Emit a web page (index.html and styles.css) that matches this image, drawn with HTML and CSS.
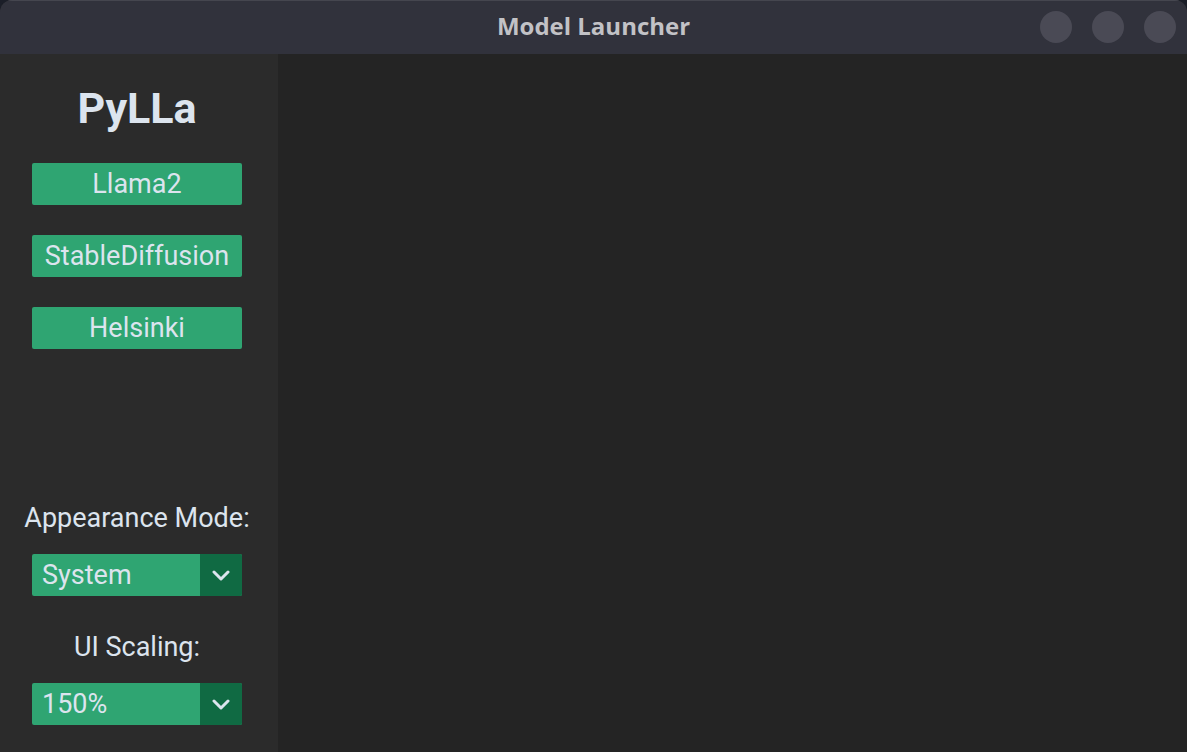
FILE: index.html
```html
<!DOCTYPE html>
<html>
<head>
<meta charset="utf-8">
<link rel="stylesheet" href="styles.css">
</head>
<body>
<div class="window">
  <div class="titlebar">
    <div class="title">Model Launcher</div>
    <div class="controls">
      <span class="ctl"></span><span class="ctl"></span><span class="ctl"></span>
    </div>
  </div>
  <div class="content">
    <div class="sidebar">
      <div class="logo">PyLLa</div>
      <div class="btn first">Llama2</div>
      <div class="btn">StableDiffusion</div>
      <div class="btn">Helsinki</div>
      <div class="spacer"></div>
      <div class="label">Appearance Mode:</div>
      <div class="select">
        <span class="value">System</span>
        <span class="arrow"><svg width="18" height="11" viewBox="0 0 18 11"><polyline points="2,2 9,9 16,2" fill="none" stroke="#dce4ee" stroke-width="3" stroke-linecap="round" stroke-linejoin="round"/></svg></span>
      </div>
      <div class="label second">UI Scaling:</div>
      <div class="select">
        <span class="value">150%</span>
        <span class="arrow"><svg width="18" height="11" viewBox="0 0 18 11"><polyline points="2,2 9,9 16,2" fill="none" stroke="#dce4ee" stroke-width="3" stroke-linecap="round" stroke-linejoin="round"/></svg></span>
      </div>
    </div>
    <div class="main"></div>
  </div>
</div>
</body>
</html>
```
FILE: styles.css
```css
html, body {
  margin: 0;
  padding: 0;
  background: #1b1e28;
  width: 1187px;
  height: 752px;
  overflow: hidden;
}
.window {
  width: 1187px;
  height: 752px;
  display: flex;
  flex-direction: column;
  border-radius: 12px 12px 0 0;
  overflow: hidden;
  background: #242424;
}
.titlebar {
  height: 54px;
  flex: none;
  box-sizing: border-box;
  border-top: 1px solid #45464f;
  background: #31323c;
  position: relative;
  display: flex;
  align-items: center;
  justify-content: center;
}
.title {
  font-family: "Open Sans", sans-serif;
  font-weight: 700;
  font-size: 24px;
  color: #c2c2c6;
  margin-top: -4px;
}
.controls {
  position: absolute;
  right: 11px;
  top: 10px;
  display: flex;
  gap: 20px;
}
.ctl {
  width: 32px;
  height: 32px;
  border-radius: 50%;
  background: #4a4a55;
}
.content {
  flex: 1;
  display: flex;
}
.sidebar {
  width: 278px;
  flex: none;
  box-sizing: border-box;
  background: #2b2b2b;
  padding: 30px 36px 27px 32px;
  display: flex;
  flex-direction: column;
  align-items: center;
  font-family: Roboto, sans-serif;
  color: #dce4ee;
}
.main {
  flex: 1;
  background: #242424;
}
.logo {
  font-size: 43px;
  font-weight: 700;
  line-height: 48px;
  height: 48px;
}
.btn {
  width: 210px;
  height: 42px;
  margin-top: 30px;
  background: #2fa572;
  border-radius: 2px;
  font-size: 27px;
  line-height: 42px;
  text-align: center;
  white-space: nowrap;
}
.btn.first {
  margin-top: 31px;
}
.spacer {
  flex: 1;
}
.label {
  font-size: 27px;
  line-height: 32px;
  white-space: nowrap;
  margin-bottom: 20px;
}
.label.second {
  margin-top: 35px;
}
.select {
  width: 210px;
  height: 42px;
  display: flex;
  background: #2fa572;
  border-radius: 2px;
  overflow: hidden;
  font-size: 27px;
}
.value {
  flex: 1;
  padding-left: 10px;
  line-height: 42px;
}
.arrow {
  width: 42px;
  background: #106a43;
  display: flex;
  align-items: center;
  justify-content: center;
}
```
